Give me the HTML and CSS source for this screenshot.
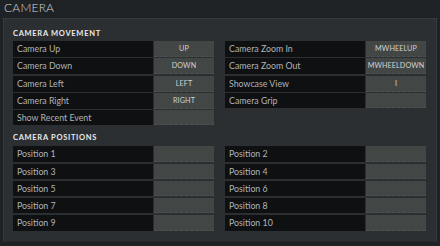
FILE: index.html
```html
<!DOCTYPE html>
<html lang="en">
<head>
  <meta charset="UTF-8" />
  <title>Camera Hotkeys</title>
  <link rel="stylesheet" href="styles.css">
</head>
<body>
  <h1 class="pageTitle">CAMERA</h1>
  <div class="panel">
    <h2 class="sectionTitle">CAMERA MOVEMENT</h2>
    <div class="columns">
      <div class="column">
        <div class="bind"><span class="label">Camera Up</span><span class="key">UP</span></div>
        <div class="bind"><span class="label">Camera Down</span><span class="key">DOWN</span></div>
        <div class="bind"><span class="label">Camera Left</span><span class="key">LEFT</span></div>
        <div class="bind"><span class="label">Camera Right</span><span class="key">RIGHT</span></div>
        <div class="bind"><span class="label">Show Recent Event</span><span class="key"></span></div>
      </div>
      <div class="column">
        <div class="bind"><span class="label">Camera Zoom In</span><span class="key">MWHEELUP</span></div>
        <div class="bind"><span class="label">Camera Zoom Out</span><span class="key">MWHEELDOWN</span></div>
        <div class="bind"><span class="label">Showcase View</span><span class="key">I</span></div>
        <div class="bind"><span class="label">Camera Grip</span><span class="key"></span></div>
      </div>
    </div>

    <h2 class="sectionTitle second">CAMERA POSITIONS</h2>
    <div class="columns">
      <div class="column">
        <div class="bind"><span class="label">Position 1</span><span class="key"></span></div>
        <div class="bind"><span class="label">Position 3</span><span class="key"></span></div>
        <div class="bind"><span class="label">Position 5</span><span class="key"></span></div>
        <div class="bind"><span class="label">Position 7</span><span class="key"></span></div>
        <div class="bind"><span class="label">Position 9</span><span class="key"></span></div>
      </div>
      <div class="column">
        <div class="bind"><span class="label">Position 2</span><span class="key"></span></div>
        <div class="bind"><span class="label">Position 4</span><span class="key"></span></div>
        <div class="bind"><span class="label">Position 6</span><span class="key"></span></div>
        <div class="bind"><span class="label">Position 8</span><span class="key"></span></div>
        <div class="bind"><span class="label">Position 10</span><span class="key"></span></div>
      </div>
    </div>
  </div>
</body>
</html>
```

FILE: styles.css
```css
html, body {
  margin: 0;
  padding: 0;
  background: #1f2225;
  font-family: Lato, "Open Sans", sans-serif;
}
.pageTitle {
  margin: 0;
  padding: 0 4px;
  height: 18px;
  line-height: 16px;
  font-size: 12px;
  font-weight: 300;
  letter-spacing: 0.2px;
  color: #d4d6d8;
}
.panel {
  margin-left: 3px;
  width: 434px;
  height: 224px;
  box-sizing: border-box;
  padding: 10px 11px 0 9px;
  background: #2b2f32;
  border: 1px solid #363a3d;
  border-bottom-color: #24282a;
}
.sectionTitle {
  margin: 0 0 2px;
  line-height: 10px;
  font-size: 7.5px;
  font-weight: 700;
  letter-spacing: 0.7px;
  color: #ebebeb;
}
.sectionTitle.second {
  margin-top: 8px;
  margin-bottom: 3px;
}
.columns {
  display: flex;
  gap: 11px;
}
.column {
  display: flex;
  flex-direction: column;
  gap: 2px;
  width: 201px;
}
.bind {
  display: grid;
  grid-template-columns: 140px 60px;
  gap: 1px;
  height: 15.25px;
  line-height: 15px;
}
.label {
  background: #0e1012;
  padding-left: 4px;
  font-size: 8.8px;
  color: #b1b4b6;
  white-space: nowrap;
  overflow: hidden;
}
.key {
  background: #424746;
  border-bottom: 1px dashed #4d5352;
  box-sizing: border-box;
  text-align: center;
  font-size: 7.2px;
  letter-spacing: 0.1px;
  color: #cfd2d2;
  white-space: nowrap;
}
```
